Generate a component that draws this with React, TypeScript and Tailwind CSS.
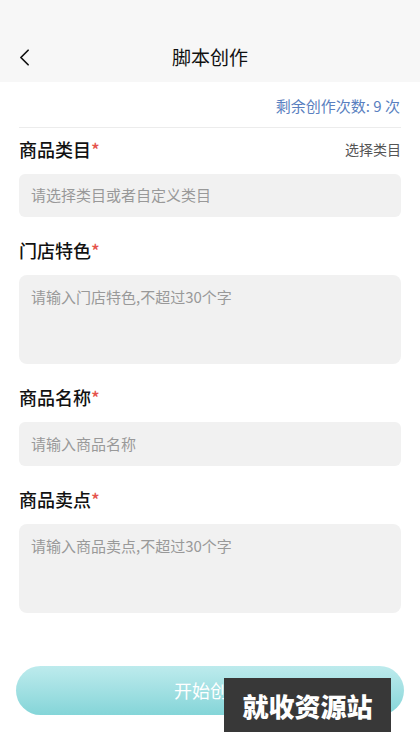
import { ChevronLeft } from "lucide-react";

const font = "font-['Noto_Sans_CJK_SC','Noto_Sans',sans-serif]";

function Label({ text }: { text: string }) {
  return (
    <div className="text-[18px] leading-[24px] font-medium text-[#111]">
      {text}
      <span className="text-[#e5534b]">*</span>
    </div>
  );
}

export default function App() {
  return (
    <div className={`relative w-[420px] h-[748px] overflow-hidden bg-white ${font}`}>
      {/* header */}
      <div className="h-[82px] bg-[#f7f7f7] flex items-end pb-[12px] relative">
        <ChevronLeft className="absolute left-[10px] top-[43px] text-[#111]" size={29} strokeWidth={1.4} />
        <div className="w-full text-center text-[19px] leading-[26px] text-[#111]">脚本创作</div>
      </div>

      <div className="px-[19px]">
        <div className="flex justify-end pt-[13px] pb-[10px] pr-[1px] text-[15px] leading-[22px] text-[#5a7fc0]">
          剩余创作次数: 9 次
        </div>
        <div className="h-px bg-[#ececec]" />

        <div className="flex items-center justify-between mt-[9px]">
          <Label text="商品类目" />
          <span className="text-[14px] text-[#555]">选择类目</span>
        </div>
        <div className="mt-[13px] h-[43px] rounded-[6px] bg-[#f1f1f1] flex items-center px-[12px] text-[15px] text-[#999]">
          请选择类目或者自定义类目
        </div>

        <div className="mt-[21px]">
          <Label text="门店特色" />
        </div>
        <div className="mt-[13px] h-[89px] rounded-[8px] bg-[#f1f1f1] px-[12px] pt-[11px] text-[15px] leading-[22px] text-[#999]">
          请输入门店特色,不超过30个字
        </div>

        <div className="mt-[21px]">
          <Label text="商品名称" />
        </div>
        <div className="mt-[13px] h-[44px] rounded-[6px] bg-[#f1f1f1] flex items-center px-[12px] text-[15px] text-[#999]">
          请输入商品名称
        </div>

        <div className="mt-[21px]">
          <Label text="商品卖点" />
        </div>
        <div className="mt-[13px] h-[89px] rounded-[8px] bg-[#f1f1f1] px-[12px] pt-[11px] text-[15px] leading-[22px] text-[#999]">
          请输入商品卖点,不超过30个字
        </div>
      </div>

      <div className="px-[16px] mt-[53px]">
        <div className="h-[49px] rounded-full bg-gradient-to-b from-[#bdebed] to-[#84d5d8] flex items-center justify-center text-[18px] text-white">
          开始创作
        </div>
      </div>

      {/* watermark */}
      <div className="absolute left-[224px] top-[678px] w-[167px] h-[54px] bg-[#383838] flex items-center justify-center text-[26px] font-black text-white">
        就收资源站
      </div>
    </div>
  );
}
